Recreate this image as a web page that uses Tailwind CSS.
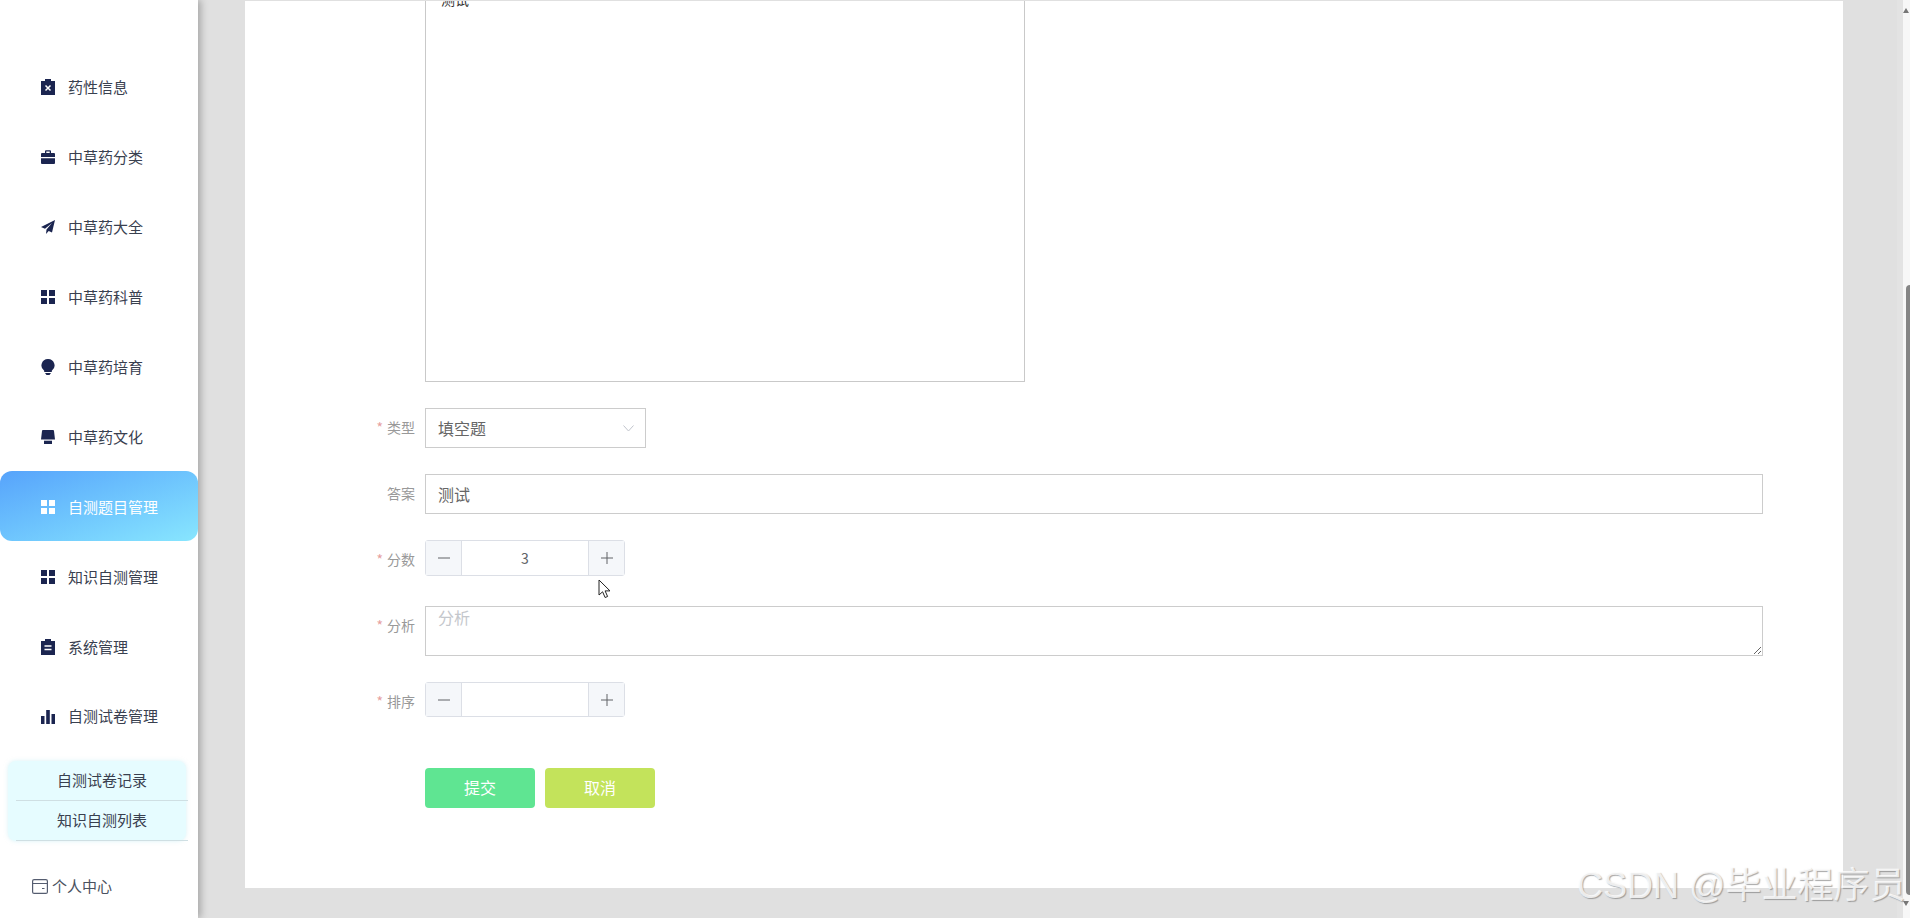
<!DOCTYPE html>
<html lang="zh-CN">
<head>
    <meta charset="UTF-8">
    <meta name="viewport" content="width=device-width, initial-scale=1.0">
    <title>自测题目管理</title>
    <script src="https://cdn.jsdelivr.net/npm/@tailwindcss/browser@4"></script>
</head>
<body class="bg-[#e0e0e0] font-['Noto_Sans_CJK_SC',sans-serif] overflow-hidden">
<div class="relative flex h-[918px] w-[1910px] overflow-hidden">

    <!-- Sidebar -->
    <aside class="relative z-10 w-[198px] shrink-0 bg-white pt-[52px] text-[15px] text-[#39404f] shadow-[3px_0_7px_rgba(0,0,0,0.25)]">
        <a class="flex h-[70px] items-center gap-[13px] pl-[41px]">
            <svg class="h-[16px] w-[14px] text-[#1b2550]" viewBox="0 0 14 16" fill="currentColor"><path d="M4 0h6v2h4v14H0V2h4z"/><path d="M4.500 6.500l5 5M9.500 6.500l-5 5" stroke="#fff" stroke-width="1.500"/></svg>
            <span>药性信息</span>
        </a>
        <a class="flex h-[70px] items-center gap-[13px] pl-[41px]">
            <svg class="h-[14px] w-[14px] text-[#1b2550]" viewBox="0 0 14 14" fill="currentColor"><path d="M4 3V1.200a1 1 0 0 1 1-1h4a1 1 0 0 1 1 1V3h3a1 1 0 0 1 1 1v3H0V4a1 1 0 0 1 1-1zm1.300 0h3.400V1.500H5.300z"/><path d="M0 8.200h14V13a1 1 0 0 1-1 1H1a1 1 0 0 1-1-1z"/></svg>
            <span>中草药分类</span>
        </a>
        <a class="flex h-[70px] items-center gap-[13px] pl-[41px]">
            <svg class="h-[14px] w-[14px] text-[#1b2550]" viewBox="0 0 14 14" fill="currentColor"><path d="M14 0L0 7l4 1.800L11 3 5.500 9.500 5 14l2.700-3 3.300 1.500z"/></svg>
            <span>中草药大全</span>
        </a>
        <a class="flex h-[70px] items-center gap-[13px] pl-[41px]">
            <svg class="h-[14px] w-[14px] text-[#1b2550]" viewBox="0 0 14 14" fill="currentColor"><path d="M0 0h6v6H0zM8 0h6v6H8zM0 8h6v6H0zM8 8h6v6H8z"/></svg>
            <span>中草药科普</span>
        </a>
        <a class="flex h-[70px] items-center gap-[13px] pl-[41px]">
            <svg class="h-[16px] w-[14px] text-[#1b2550]" viewBox="0 0 14 16" fill="currentColor"><path d="M7 0a6.500 6.500 0 0 1 3.800 11.800V13H3.200v-1.200A6.500 6.500 0 0 1 7 0z"/><path d="M4 14h6l-1.500 2h-3z"/></svg>
            <span>中草药培育</span>
        </a>
        <a class="flex h-[69px] items-center gap-[13px] pt-px pl-[41px]">
            <svg class="h-[14px] w-[14px] text-[#1b2550]" viewBox="0 0 14 14" fill="currentColor"><path d="M2 0h10a1 1 0 0 1 1 1l1 8.500H0L1 1a1 1 0 0 1 1-1z"/><path d="M3 10.700h8V14H3z"/></svg>
            <span>中草药文化</span>
        </a>
        <a class="flex h-[70px] items-center gap-[13px] rounded-xl bg-gradient-to-br from-[#57a3fb] to-[#88e6fe] pt-[2px] pl-[41px] text-white">
            <svg class="h-[14px] w-[14px]" viewBox="0 0 14 14" fill="currentColor"><path d="M0 0h6v6H0zM8 0h6v6H8zM0 8h6v6H0zM8 8h6v6H8z"/></svg>
            <span>自测题目管理</span>
        </a>
        <a class="flex h-[70px] items-center gap-[13px] pt-[2px] pl-[41px]">
            <svg class="h-[14px] w-[14px] text-[#1b2550]" viewBox="0 0 14 14" fill="currentColor"><path d="M0 0h6v6H0zM8 0h6v6H8zM0 8h6v6H0zM8 8h6v6H8z"/></svg>
            <span>知识自测管理</span>
        </a>
        <a class="flex h-[70px] items-center gap-[13px] pt-[2px] pl-[41px]">
            <svg class="h-[16px] w-[14px] text-[#1b2550]" viewBox="0 0 14 16" fill="currentColor"><path d="M4 0h6v2h4v14H0V2h4z"/><path d="M3.500 7h7M3.500 10.500h7" stroke="#fff" stroke-width="1.500"/></svg>
            <span>系统管理</span>
        </a>
        <a class="flex h-[70px] items-center gap-[13px] pt-px pl-[41px]">
            <svg class="h-[14px] w-[14px] text-[#1b2550]" viewBox="0 0 14 14" fill="currentColor"><path d="M0 6h3.500v8H0zM5.200 0h3.600v14H5.200zM10.500 4H14v10h-3.500z"/></svg>
            <span>自测试卷管理</span>
        </a>

        <!-- Sub menu -->
        <div class="mt-[10px] ml-[8px] w-[178px] rounded-lg bg-[#e6fcff] shadow-[0_0_4px_rgba(180,230,240,0.5)]">
            <a class="ml-[8px] flex h-[40px] w-[172px] items-center justify-center border-b border-[#cfdfe3]">自测试卷记录</a>
            <a class="ml-[8px] flex h-[40px] w-[172px] items-center justify-center border-b border-[#cfdfe3]">知识自测列表</a>
        </div>

        <a class="mt-[34px] flex items-center gap-[4px] pl-[32px] text-[#4a5160]">
            <svg class="h-[15px] w-[16px] text-[#555d70]" viewBox="0 0 16 15" fill="none" stroke="currentColor" stroke-width="1.200"><rect x="0.600" y="0.600" width="14.800" height="13.800" rx="1.500"/><path d="M0.600 4.500h14.800M10 9.500h2.500"/></svg>
            <span>个人中心</span>
        </a>
    </aside>

    <!-- Main -->
    <main class="min-w-0 flex-1 border-r-[6px] border-[#e3e3e3] pt-px pl-[47px] pr-[54px]">
        <section class="flex h-[887px] flex-col bg-white pl-[70px] text-[14px]">
            <div class="ml-[110px] h-[381px] w-[600px] overflow-hidden border-x border-b border-[#c9c9c9]">
                <p class="mt-[-12px] pl-[15px] text-[14px] leading-[20px] text-[#333]">测试</p>
            </div>

            <div class="mt-[26px] flex items-start gap-[10px]">
                <label class="h-[40px] w-[100px] text-right leading-[38px] text-[#999]"><span class="mr-1 text-[#e6a0a0]">*</span>类型</label>
                <div class="flex h-[40px] w-[221px] items-center justify-between border border-[#ccc] pr-[11px] pl-[12px] text-[16px] text-[#666]">
                    <span>填空题</span>
                    <svg class="h-[7px] w-[11px] text-[#c0c4cc]" viewBox="0 0 11 7" fill="none" stroke="currentColor"><path d="M0.500 0.500l5 5.500 5-5.500"/></svg>
                </div>
            </div>

            <div class="mt-[26px] flex items-start gap-[10px]">
                <label class="h-[40px] w-[100px] text-right leading-[38px] text-[#999]">答案</label>
                <input class="h-[40px] w-[1338px] border border-[#ccc] px-[12px] text-[16px] text-[#666] outline-none" value="测试">
            </div>

            <div class="mt-[26px] flex items-start gap-[10px]">
                <label class="h-[40px] w-[100px] text-right leading-[38px] text-[#999]"><span class="mr-1 text-[#e6a0a0]">*</span>分数</label>
                <div class="flex h-[36px] w-[200px] rounded-[3px] border border-[#dcdfe6] text-[#606266]">
                    <button class="flex w-[36px] items-center justify-center border-r border-[#dcdfe6] bg-[#f5f7fa]">
                        <svg class="h-[12px] w-[12px]" viewBox="0 0 12 12" stroke="currentColor"><path d="M0 6h12"/></svg>
                    </button>
                    <div class="flex flex-1 items-center justify-center">3</div>
                    <button class="flex w-[36px] items-center justify-center border-l border-[#dcdfe6] bg-[#f5f7fa]">
                        <svg class="h-[12px] w-[12px]" viewBox="0 0 12 12" stroke="currentColor"><path d="M0 6h12M6 0v12"/></svg>
                    </button>
                </div>
            </div>

            <div class="mt-[26px] flex items-start gap-[10px]">
                <label class="h-[40px] w-[100px] text-right leading-[38px] text-[#999]"><span class="mr-1 text-[#e6a0a0]">*</span>分析</label>
                <textarea class="block h-[50px] w-[1338px] border border-[#ccc] px-[12px] text-[16px] leading-[20px] text-[#666] outline-none placeholder:text-[#c4c7cc]" placeholder="分析"></textarea>
            </div>

            <div class="mt-[26px] flex items-start gap-[10px]">
                <label class="h-[40px] w-[100px] text-right leading-[38px] text-[#999]"><span class="mr-1 text-[#e6a0a0]">*</span>排序</label>
                <div class="flex h-[35px] w-[200px] rounded-[3px] border border-[#dcdfe6] text-[#606266]">
                    <button class="flex w-[36px] items-center justify-center border-r border-[#dcdfe6] bg-[#f5f7fa]">
                        <svg class="h-[12px] w-[12px]" viewBox="0 0 12 12" stroke="currentColor"><path d="M0 6h12"/></svg>
                    </button>
                    <div class="flex-1"></div>
                    <button class="flex w-[36px] items-center justify-center border-l border-[#dcdfe6] bg-[#f5f7fa]">
                        <svg class="h-[12px] w-[12px]" viewBox="0 0 12 12" stroke="currentColor"><path d="M0 6h12M6 0v12"/></svg>
                    </button>
                </div>
            </div>

            <div class="mt-[46px] ml-[110px] flex gap-[10px] text-[16px] text-white">
                <button class="h-[40px] w-[110px] rounded-[4px] bg-[#5fe592] pb-[2px]">提交</button>
                <button class="h-[40px] w-[110px] rounded-[4px] bg-[#c3e35b] pb-[2px]">取消</button>
            </div>
        </section>
    </main>

    <!-- Scrollbar -->
    <div class="flex w-[7px] shrink-0 flex-col items-end bg-[#f7f7f7] pt-[8px] pb-[3px]">
        <svg class="mr-[1px] h-[5px] w-[6px]" viewBox="0 0 6 5" fill="#777"><path d="M3 0l3 5H0z"/></svg>
        <div class="mt-[272px] h-[610px] w-[4px] rounded-l-sm bg-[#858585]"></div>
        <svg class="mt-[6px] mr-[1px] h-[5px] w-[6px]" viewBox="0 0 6 5" fill="#777"><path d="M3 5L0 0h6z"/></svg>
    </div>

    <!-- Mouse pointer -->
    <svg class="absolute top-[579px] left-[598px] z-20 h-[20px] w-[13px]" viewBox="0 0 13 20" fill="#fff" stroke="#222"><path d="M1 1v15l3.600-3.200 2.500 5.700 2.500-1-2.500-5.600H12z"/></svg>

    <!-- Watermark -->
    <div class="absolute top-[862px] left-[1577px] z-20 font-['Liberation_Sans','Noto_Sans_CJK_SC',sans-serif] text-[36px] leading-[48px] whitespace-nowrap text-white/80 [text-shadow:1px_1px_1px_rgba(110,110,110,0.6)]">CSDN @毕业程序员</div>
</div>
</body>
</html>
